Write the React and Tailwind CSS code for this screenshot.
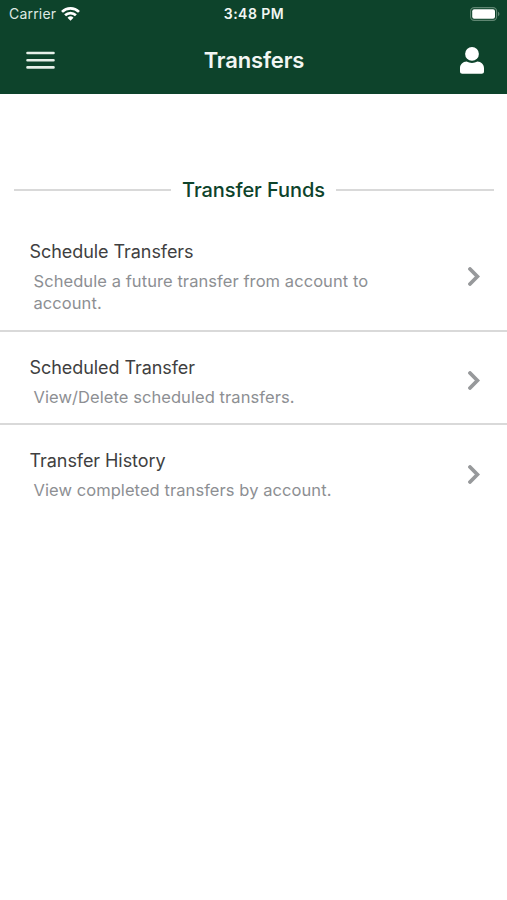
const ITEMS = [
  { title: "Schedule Transfers", text: "Schedule a future transfer from account to account." },
  { title: "Scheduled Transfer", text: "View/Delete scheduled transfers." },
  { title: "Transfer History", text: "View completed transfers by account." },
];

function WifiIcon() {
  return (
    <svg className="w-[19px] h-[14px]" viewBox="0 0 19 14" fill="none" stroke="white" strokeWidth="2.7">
      <path d="M1 4.9a12.2 12.2 0 0 1 17 0" />
      <path d="M4.1 8.3a7.7 7.7 0 0 1 10.8 0" />
      <path d="M9.5 13.8 6.5 10.8a4.3 4.3 0 0 1 6 0Z" fill="white" stroke="none" />
    </svg>
  );
}

function BatteryIcon() {
  return (
    <svg className="w-[30px] h-[14px]" viewBox="0 0 30 14" fill="none">
      <rect x="0.6" y="0.6" width="26" height="12.8" rx="3.6" stroke="#5f8672" strokeWidth="1.1" />
      <rect x="2.2" y="2.2" width="22.8" height="9.6" rx="2" fill="white" />
      <path d="M28 4.8c1.9.7 1.9 3.7 0 4.4Z" fill="#5f8672" />
    </svg>
  );
}

function MenuIcon() {
  return (
    <svg className="w-[29px] h-[18px]" viewBox="0 0 29 18" stroke="#e6f0e9" strokeWidth="2.6" strokeLinecap="round">
      <path d="M1.5 2h26M1.5 9.2h26M1.5 16.4h26" />
    </svg>
  );
}

function UserIcon() {
  return (
    <svg className="w-6 h-[27px]" viewBox="0 0 24 27" fill="white">
      <circle cx="12" cy="6.9" r="6.9" />
      <path d="M6.6 14.6c1.6.9 3.4 1.4 5.4 1.4s3.8-.5 5.4-1.4c3.7.1 6.6 3 6.6 6.7v3.2c0 1.3-1 2.3-2.3 2.3H2.3C1 26.8 0 25.8 0 24.5v-3.2c0-3.7 2.9-6.6 6.6-6.7Z" />
    </svg>
  );
}

function Chevron() {
  return (
    <svg className="w-3 h-[19px] mb-[2px] shrink-0" viewBox="0 0 12 19" fill="none" stroke="#97999b" strokeWidth="3.8">
      <path d="M2 2 9.400 9.500 2 17" strokeLinecap="round" />
    </svg>
  );
}

export default function App() {
  return (
    <div className="w-full min-h-[900px] bg-white font-['Inter',sans-serif]">
      <header className="h-[94px] bg-[#0d432b] text-[#f2f6f3]">
        <div className="grid grid-cols-3 items-center h-[27px] pl-[9px] pr-[7px]">
          <div className="flex items-center gap-[5px] text-[14px]">
            <span className="tracking-[0.2px] text-[#dfe9e3]">Carrier</span>
            <WifiIcon />
          </div>
          <span className="pr-px text-center text-[14px] leading-5 font-semibold tracking-[0.45px]">3:48 PM</span>
          <div className="flex justify-end">
            <BatteryIcon />
          </div>
        </div>
        <div className="grid grid-cols-3 items-center h-[66px] pl-[26px] pr-[23px]">
          <button aria-label="Menu" className="flex">
            <MenuIcon />
          </button>
          <h1 className="pr-[2px] text-center text-[22px] font-semibold tracking-[-0.15px]">Transfers</h1>
          <button aria-label="Profile" className="flex justify-end">
            <UserIcon />
          </button>
        </div>
      </header>

      <main>
        <div className="flex items-center gap-[11px] px-[13.5px] pt-[83px]">
          <div className="h-[2px] flex-1 bg-[#d9d9d9]" />
          <h2 className="text-[20px] leading-[26px] font-medium tracking-[-0.08px] text-[#0d432b]">Transfer Funds</h2>
          <div className="h-[2px] flex-1 bg-[#d9d9d9]" />
        </div>

        <ul className="pt-[13px]">
          {ITEMS.map((item) => (
            <li
              key={item.title}
              className="flex items-center justify-between pt-6 pb-[15.6px] pl-[29.5px] pr-[27px] border-b-2 border-[#d9d9d9] last:border-b-0"
            >
              <div className="w-[360px]">
                <h3 className="text-[18px] leading-6 tracking-[-0.06px] text-[#3f3f41]">{item.title}</h3>
                <p className="pt-[6px] pl-1 text-[16.5px] leading-[22px] tracking-[0.07px] text-[#8d8f93]">{item.text}</p>
              </div>
              <Chevron />
            </li>
          ))}
        </ul>
      </main>
    </div>
  );
}
